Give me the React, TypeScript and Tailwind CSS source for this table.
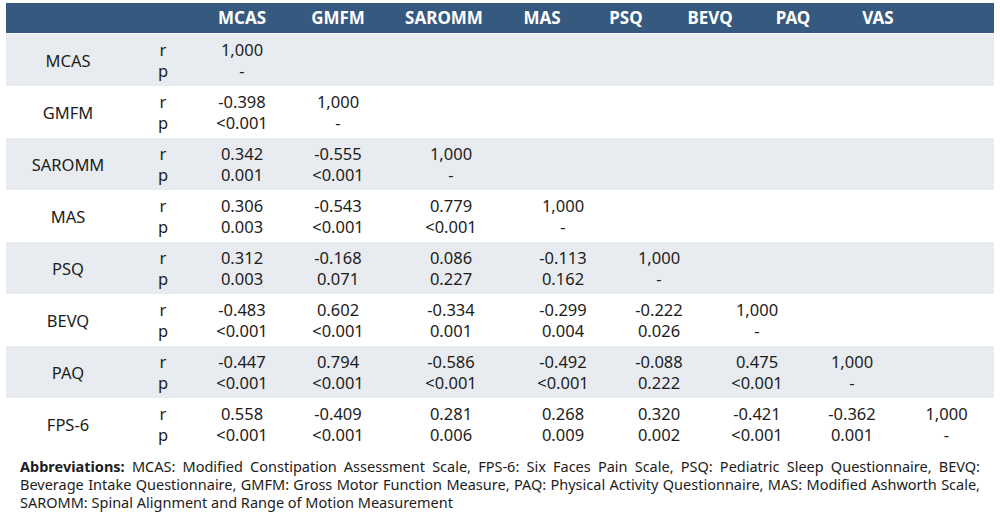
const headers = ['MCAS', 'GMFM', 'SAROMM', 'MAS', 'PSQ', 'BEVQ', 'PAQ', 'VAS'];

const rows: { label: string; r: string[]; p: string[] }[] = [
  { label: 'MCAS', r: ['1,000'], p: ['-'] },
  { label: 'GMFM', r: ['-0.398', '1,000'], p: ['<0.001', '-'] },
  { label: 'SAROMM', r: ['0.342', '-0.555', '1,000'], p: ['0.001', '<0.001', '-'] },
  { label: 'MAS', r: ['0.306', '-0.543', '0.779', '1,000'], p: ['0.003', '<0.001', '<0.001', '-'] },
  {
    label: 'PSQ',
    r: ['0.312', '-0.168', '0.086', '-0.113', '1,000'],
    p: ['0.003', '0.071', '0.227', '0.162', '-'],
  },
  {
    label: 'BEVQ',
    r: ['-0.483', '0.602', '-0.334', '-0.299', '-0.222', '1,000'],
    p: ['<0.001', '<0.001', '0.001', '0.004', '0.026', '-'],
  },
  {
    label: 'PAQ',
    r: ['-0.447', '0.794', '-0.586', '-0.492', '-0.088', '0.475', '1,000'],
    p: ['<0.001', '<0.001', '<0.001', '<0.001', '0.222', '<0.001', '-'],
  },
  {
    label: 'FPS-6',
    r: ['0.558', '-0.409', '0.281', '0.268', '0.320', '-0.421', '-0.362', '1,000'],
    p: ['<0.001', '<0.001', '0.006', '0.009', '0.002', '<0.001', '0.001', '-'],
  },
];

export default function App() {
  return (
    <div
      className="w-[1000px] h-[524px] bg-white text-[#1c1c1c] pt-[3px] px-[6px]"
      style={{ fontFamily: '"Noto Sans", "Open Sans", sans-serif' }}
    >
      {/* Header */}
      <div className="grid grid-cols-[188px_96px_96px_116px_80px_88px_80px_86px_84px_77px] h-[30px] items-center bg-[#365a7f] text-white font-bold text-[17px]">
        <div />
        {headers.map((h) => (
          <div key={h} className="text-center">
            {h}
          </div>
        ))}
        <div />
      </div>
      <div className="h-[1px] bg-[#f4f6f8]" />

      {/* Body */}
      {rows.map((row, i) => (
        <div
          key={row.label}
          className={`grid grid-cols-[124px_66px_92px_100px_126px_98px_94px_102px_88px_101px] h-[52px] items-center text-[16.5px] leading-[21px] ${
            i % 2 === 0 ? 'bg-[#e8ecf0]' : 'bg-white'
          }`}
        >
          <div className="text-center">{row.label}</div>
          <div className="flex flex-col items-center">
            <span>r</span>
            <span>p</span>
          </div>
          {headers.map((h, j) => (
            <div key={h} className="flex flex-col items-center">
              <span>{row.r[j] ?? '\u00a0'}</span>
              <span>{row.p[j] ?? '\u00a0'}</span>
            </div>
          ))}
        </div>
      ))}

      {/* Footnote */}
      <p className="mt-[7px] px-[14px] text-[14.5px] leading-[18px] text-justify">
        <b>Abbreviations:</b> MCAS: Modified Constipation Assessment Scale, FPS-6: Six Faces Pain Scale, PSQ:
        Pediatric Sleep Questionnaire, BEVQ: Beverage Intake Questionnaire, GMFM: Gross Motor Function Measure,
        PAQ: Physical Activity Questionnaire, MAS: Modified Ashworth Scale, SAROMM: Spinal Alignment and Range of
        Motion Measurement
      </p>
    </div>
  );
}
